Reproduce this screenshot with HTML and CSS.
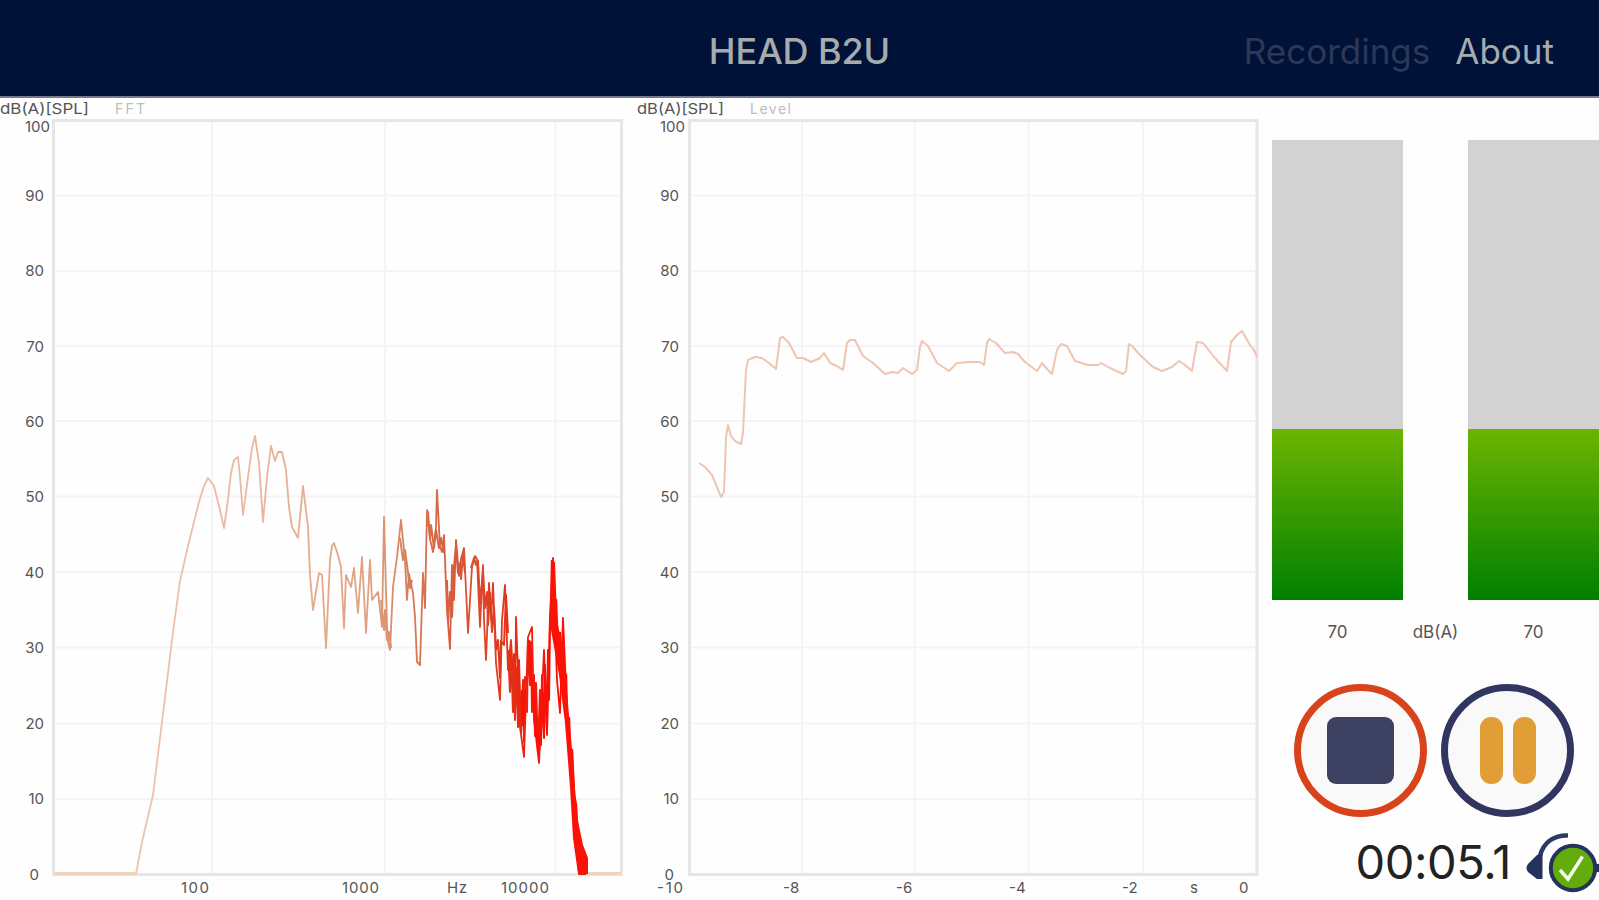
FILE: index.html
```html
<!DOCTYPE html>
<html lang="en">
<head>
<meta charset="utf-8">
<title>HEAD B2U</title>
<link rel="stylesheet" href="styles.css">
</head>
<body>
<header class="topbar">
  <h1 class="title">HEAD B2U</h1>
  <nav class="nav"><a class="nav-link disabled">Recordings</a><a class="nav-link">About</a></nav>
</header>
<main class="main">
  <svg class="chart" viewBox="0 98 636 802" width="636" height="802">
    <defs>
      <linearGradient id="heat" gradientUnits="userSpaceOnUse" x1="54" y1="0" x2="622" y2="0">
        <stop offset="0" stop-color="#f0cdb4"/><stop offset=".35" stop-color="#ebb79f"/>
        <stop offset=".56" stop-color="#dfa080"/><stop offset=".62" stop-color="#d5805c"/>
        <stop offset=".72" stop-color="#d95436"/><stop offset=".8" stop-color="#e23218"/><stop offset=".87" stop-color="#fa0f04"/>
        <stop offset="1" stop-color="#ff0a00"/>
      </linearGradient>
    </defs>
    <path class="grid" d="M54 195.5H621M54 271H621M54 346H621M54 421H621M54 496.500H621M54 572H621M54 647.500H621M54 723.500H621M54 799H621M212 121V874M385 121V874M555.500 121V874"/>
    <rect class="frame" x="53.500" y="120.500" width="568" height="754"/>
    <g class="axis">
      <text x="0" y="114" textLength="89" lengthAdjust="spacingAndGlyphs">dB(A)[SPL]</text>
      <text class="faint" x="115" y="114" textLength="30">FFT</text>
      <text class="end" x="50" y="132">100</text><text class="end" x="44" y="201">90</text><text class="end" x="44" y="276">80</text><text class="end" x="44" y="352">70</text><text class="end" x="44" y="427">60</text><text class="end" x="44" y="502">50</text><text class="end" x="44" y="578">40</text><text class="end" x="44" y="653">30</text><text class="end" x="44" y="729">20</text><text class="end" x="44" y="804">10</text><text class="end" x="39" y="880">0</text>
      <text x="181" y="893" textLength="28">100</text><text x="342" y="893" textLength="37">1000</text><text x="447" y="893" textLength="20">Hz</text><text x="501" y="893" textLength="48">10000</text>
    </g>
    <path class="floor" d="M54 873.500H136M584 873.500H621"/>
    <path class="trace" stroke="url(#heat)" d="M136 874L142 842L153 795L163 714L173 632L180 581L188 546L199 502L204 486L208 478L214 486L220 510L224 528L227 507L231 473L234 460L238 457L240 477L243 515L248 477L252 448L255 436L259 463L263 522L267 477L271 446L275 461L278 452L282 452L286 470L289 507L292 527L298 538L303 486L308 527L310 575L313 610L319 573L322 575L326 648L330 560L332 546L334 543L338 555L341 567L344 628L346 575L351 587L354 568L358 613L362 557L366 633L370 560L372 600L378 592L382 627L384 517L387 625L388 642L390 650L393 587L397 557L401 520L405 560L407 600L409 574L413 593L415 617L417 662L420 665L423 573L425 608L427 510L430 539L433 552L436 527L437 490L440 547L442 552L444 535L447 610L450 649L452 565L454 600L456 540L459 576L461 559L464 548L466 590L468 633L472 567L475 556L477 559L480 627L483 565L484 620L486 660L489 583L491 620L493 583L496 663L500 700L502 620L505 585L508 670L511 640L515 710L516 617L520 727L524 757L528 637L532 627L534 720L539 763L544 650L547 735L550 615L553 558L557 680L560 713L563 618L567 710L571 780L576 835L579 874L586 874"/>
    <path class="trace dense" stroke="url(#heat)" d="M381 600L384 630L385 610L387 640L389 632L391 648M400 538L403 560L405 550L410 588L412 580M427 526L428 512L430 538L431 525L434 548L436 530L439 548L441 538L444 553M447 580L448 622L450 592L452 617L454 566L456 547L458 573L460 563L461 579L463 555L465 573M471 568L474 558L476 565L478 561L480 604L483 571L485 608L487 592L488 625L490 593L492 632L494 607L496 650L498 640L500 678L501 641L504 645L506 595L508 633M508 650L510 692L511 650L513 712L514 654L515 720L517 667L518 727L519 660L521 733L523 680L524 742L525 677L527 712L528 640L530 685L531 642L532 712L534 675L535 736L536 683L538 752L540 690L541 745L542 675L544 738L545 665L547 733L548 650L549 700L550 625"/>
    <path class="trace hot" d="M522 690L523 725L525 690M529 640L531 675L533 690L536 730L539 750L542 720L546 690M551 625L552 561L553 570L555 617L556 600L558 656L560 633L561 672L563 641L565 694L566 675L567 725L569 718L570 758L572 750L574 795L576 805L578 840L580 850L582 872"/>
    <path class="falloff" d="M551 562H555L557 620L562 645L568 704L573 760L577 816L583 845L588 858V874H578L573 838L570 787L565 723L559 675L551 630Z"/>
  </svg>
  <svg class="chart" viewBox="636 98 636 802" width="636" height="802">
    <path class="grid" d="M690 195.500H1257M690 271H1257M690 346H1257M690 421H1257M690 496.500H1257M690 572H1257M690 647.500H1257M690 723.500H1257M690 799H1257M802 121V874M914.500 121V874M1028.500 121V874M1143 121V874"/>
    <rect class="frame" x="689.500" y="120.500" width="567.500" height="754"/>
    <g class="axis">
      <text x="637" y="114" textLength="87" lengthAdjust="spacingAndGlyphs">dB(A)[SPL]</text>
      <text class="faint" x="750" y="114" textLength="41">Level</text>
      <text class="end" x="685" y="132">100</text><text class="end" x="679" y="201">90</text><text class="end" x="679" y="276">80</text><text class="end" x="679" y="352">70</text><text class="end" x="679" y="427">60</text><text class="end" x="679" y="502">50</text><text class="end" x="679" y="578">40</text><text class="end" x="679" y="653">30</text><text class="end" x="679" y="729">20</text><text class="end" x="679" y="804">10</text><text class="end" x="674" y="880">0</text>
      <text x="657" y="893" textLength="26">-10</text><text x="783" y="893">-8</text><text x="896" y="893">-6</text><text x="1009" y="893">-4</text><text x="1122" y="893">-2</text><text x="1190" y="893">s</text><text x="1239" y="893">0</text>
    </g>
    <path class="trace level" d="M699 463L705 467L712 475L717 487L721 497L724 492L726 437L728 425L731 436L735 441L741 444L743 433L746 370L748 360L755 357L762 358L769 363L776 369L780 338L783 337L789 343L797 358L803 358L811 362L820 358L824 353L830 363L837 366L843 370L847 343L850 340L855 340L863 356L873 363L885 374L892 372L898 373L903 368L912 374L917 370L920 347L922 341L928 346L937 363L949 371L957 363L970 362L980 362L984 365L987 343L989 339L996 343L1005 353L1013 352L1018 354L1025 362L1037 371L1042 363L1047 369L1052 374L1057 350L1061 344L1067 346L1075 361L1088 365L1098 365L1101 363L1110 368L1123 374L1126 371L1129 344L1132 346L1140 355L1153 367L1162 371L1172 367L1179 361L1185 365L1192 371L1197 342L1203 343L1215 358L1227 371L1231 342L1238 334L1242 331L1250 345L1254 350L1257 357"/>
  </svg>
  <section class="panel">
    <div class="meters">
      <div class="meter"><div class="meter-fill"></div></div>
      <div class="meter"><div class="meter-fill"></div></div>
    </div>
    <div class="readings"><span>70</span><span>dB(A)</span><span>70</span></div>
    <div class="controls">
      <button class="round stop" aria-label="Stop"><span class="square"></span></button>
      <button class="round pause" aria-label="Pause"><span class="bar"></span><span class="bar"></span></button>
    </div>
    <div class="status">
      <span class="time">00:05.1</span>
      <svg class="headset" viewBox="1525 830 74 66" width="74" height="66">
        <path d="M1540 857C1543 844 1553 836 1568 836.500" fill="none" stroke="#2d3a62" stroke-width="4.500"/>
        <path d="M1542.500 855V880H1537L1528 873Q1525 869 1528 865L1537 856Z" fill="#24325c"/>
        <path d="M1595 865H1599V873H1595Z" fill="#24325c"/>
        <circle cx="1573" cy="869" r="22.200" fill="#62ad0c" stroke="#24325c" stroke-width="4"/>
        <path d="M1560 871L1568 880L1582.500 857.500" fill="none" stroke="#f2faea" stroke-width="3.500"/>
      </svg>
    </div>
  </section>
</main>
</body>
</html>
```
FILE: styles.css
```css
* { box-sizing: border-box; }
body { margin: 0; width: 1599px; height: 900px; overflow: hidden; background: #fefefe; font-family: Inter, "Liberation Sans", sans-serif; }
.topbar { height: 98px; display: grid; grid-template-columns: 1fr auto 1fr; align-items: center; background: #001238; border-bottom: 2px solid #737b93; padding: 5px 45px 0; }
.title { grid-column: 2; margin: 0; font-size: 36px; font-weight: 500; line-height: 44px; letter-spacing: -0.1px; color: #a7abad; }
.nav { display: flex; justify-content: flex-end; gap: 25px; font-size: 35px; line-height: 44px; color: #a7abad; }
.disabled { color: #2c3858; }
.main { display: flex; height: 802px; }
.chart { display: block; flex: none; }
.grid { fill: none; stroke: #f4f4f4; stroke-width: 2; }
.frame { fill: none; stroke: #e6e6e6; stroke-width: 3; }
.axis text { font-size: 15px; fill: #555; }
.axis .end { text-anchor: end; }
.axis .faint { font-size: 14px; fill: #bdbdbd; }
.floor { stroke: #eed5bd; stroke-width: 3; }
.trace { fill: none; stroke-width: 1.8; stroke-linejoin: round; }
.dense { stroke-width: 2; }
.hot { stroke: #fb1206; stroke-width: 2.5; }
.falloff { fill: #fb1206; }
.level { stroke: #efc5b2; stroke-width: 2; }
.panel { width: 327px; display: flex; flex-direction: column; padding-top: 42px; }
.meters { display: flex; gap: 65px; height: 460px; }
.meter { flex: 0 0 131px; display: flex; flex-direction: column; justify-content: flex-end; background: #d2d2d2; }
.meter-fill { height: 171px; background: linear-gradient(#6cb500, #007f00); }
.readings { display: grid; grid-template-columns: 131px 65px 131px; margin-top: 21px; height: 22px; line-height: 22px; text-align: center; font-size: 17px; color: #555; }
.readings span { display: flex; justify-content: center; white-space: nowrap; }
.controls { display: flex; gap: 14px; padding-left: 22px; margin-top: 41px; }
.round { width: 133px; height: 133px; padding: 0; border: 7px solid; border-radius: 50%; background: #f9f9f9; display: flex; align-items: center; justify-content: center; gap: 10px; }
.stop { border-color: #d9431c; }
.pause { border-color: #303660; }
.square { width: 67px; height: 67px; border-radius: 9px; background: #3d4262; }
.bar { width: 23px; height: 67px; border-radius: 11px; background: #e19e36; }
.status { display: flex; justify-content: flex-end; align-items: center; margin-top: 12px; height: 66px; gap: 14px; }
.time { font-size: 47px; line-height: 60px; letter-spacing: -0.4px; color: #222; white-space: nowrap; }
.headset { flex: none; overflow: visible; }
```
